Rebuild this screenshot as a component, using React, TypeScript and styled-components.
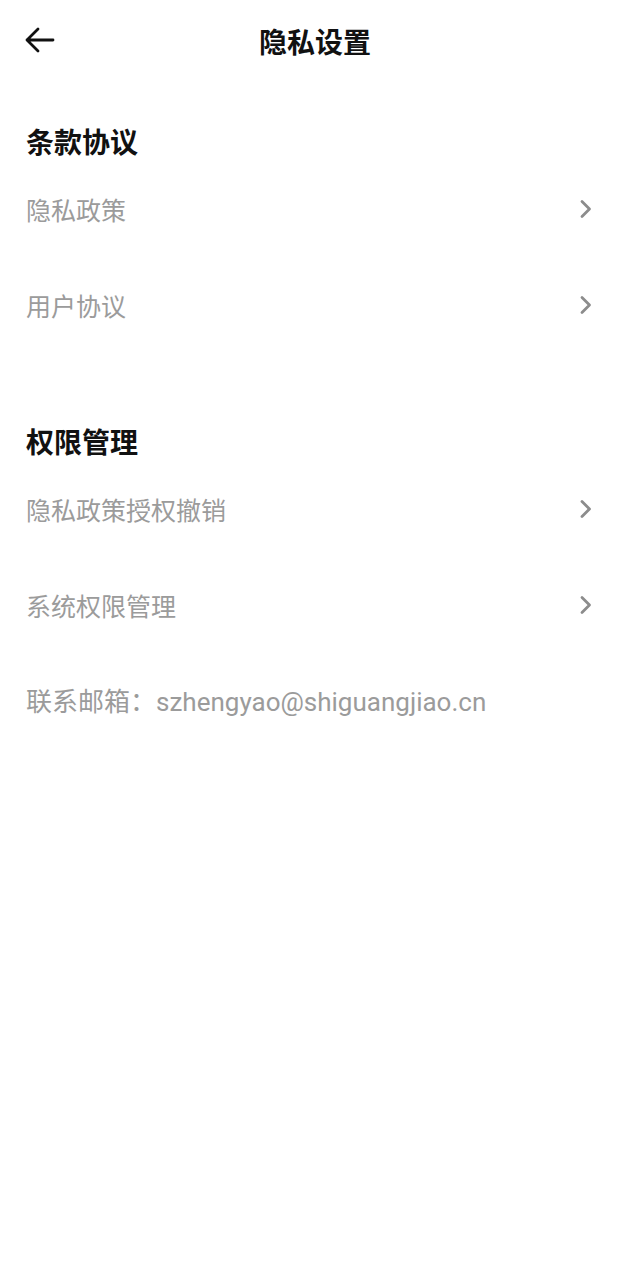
import React from "react";
import styled, { createGlobalStyle } from "styled-components";

const GlobalStyle = createGlobalStyle`
  html, body {
    margin: 0;
    padding: 0;
    background: #ffffff;
  }
  body {
    font-family: Roboto, "Noto Sans CJK SC", sans-serif;
  }
`;

const Page = styled.div`
  width: 630px;
  min-height: 1280px;
  background: #ffffff;
`;

const Header = styled.header`
  height: 81px;
  display: grid;
  grid-template-columns: 1fr auto 1fr;
  align-items: center;
  padding: 0 24px;
`;

const BackButton = styled.button`
  justify-self: start;
  background: none;
  border: none;
  padding: 0;
  display: flex;
  align-items: center;
  margin-top: -1px;
  cursor: pointer;
`;

const Title = styled.h1`
  margin: 0;
  font-size: 28px;
  font-weight: 700;
  color: #111111;
`;

const Section = styled.section<{ $top: number }>`
  margin-top: ${(p) => p.$top}px;
`;

const SectionTitle = styled.h2`
  margin: 0;
  height: 40px;
  display: flex;
  align-items: center;
  padding-left: 26px;
  font-size: 28px;
  font-weight: 700;
  color: #111111;
`;

const Row = styled.div`
  height: 96px;
  display: flex;
  align-items: center;
  justify-content: space-between;
  padding: 0 38px 0 26px;
  cursor: pointer;
`;

const RowLabel = styled.span`
  font-size: 25px;
  color: #9b9b9b;
`;

const Contact = styled.div`
  height: 92px;
  display: flex;
  align-items: center;
  padding-left: 26px;
  font-size: 26px;
  color: #9b9b9b;
`;

const BackArrow = () => (
  <svg width="31" height="26" viewBox="0 0 31 26" fill="none">
    <path
      d="M29 13H3M14 2L3 13l11 11"
      stroke="#111"
      strokeWidth="2.8"
      strokeLinecap="round"
      strokeLinejoin="round"
    />
  </svg>
);

const Chevron = () => (
  <svg width="13" height="20" viewBox="0 0 13 20" fill="none">
    <path
      d="M3 2.5l7.5 7.5L3 17.5"
      stroke="#8c8c8c"
      strokeWidth="2.8"
      strokeLinecap="round"
      strokeLinejoin="round"
    />
  </svg>
);

const ListRow = ({ label }: { label: string }) => (
  <Row>
    <RowLabel>{label}</RowLabel>
    <Chevron />
  </Row>
);

const App = () => {
  return (
    <Page>
      <GlobalStyle />
      <Header>
        <BackButton aria-label="返回">
          <BackArrow />
        </BackButton>
        <Title>隐私设置</Title>
        <span />
      </Header>

      <Section $top={40}>
        <SectionTitle>条款协议</SectionTitle>
        <ListRow label="隐私政策" />
        <ListRow label="用户协议" />
      </Section>

      <Section $top={68}>
        <SectionTitle>权限管理</SectionTitle>
        <ListRow label="隐私政策授权撤销" />
        <ListRow label="系统权限管理" />
        <Contact>联系邮箱：szhengyao@shiguangjiao.cn</Contact>
      </Section>
    </Page>
  );
};

export default App;
